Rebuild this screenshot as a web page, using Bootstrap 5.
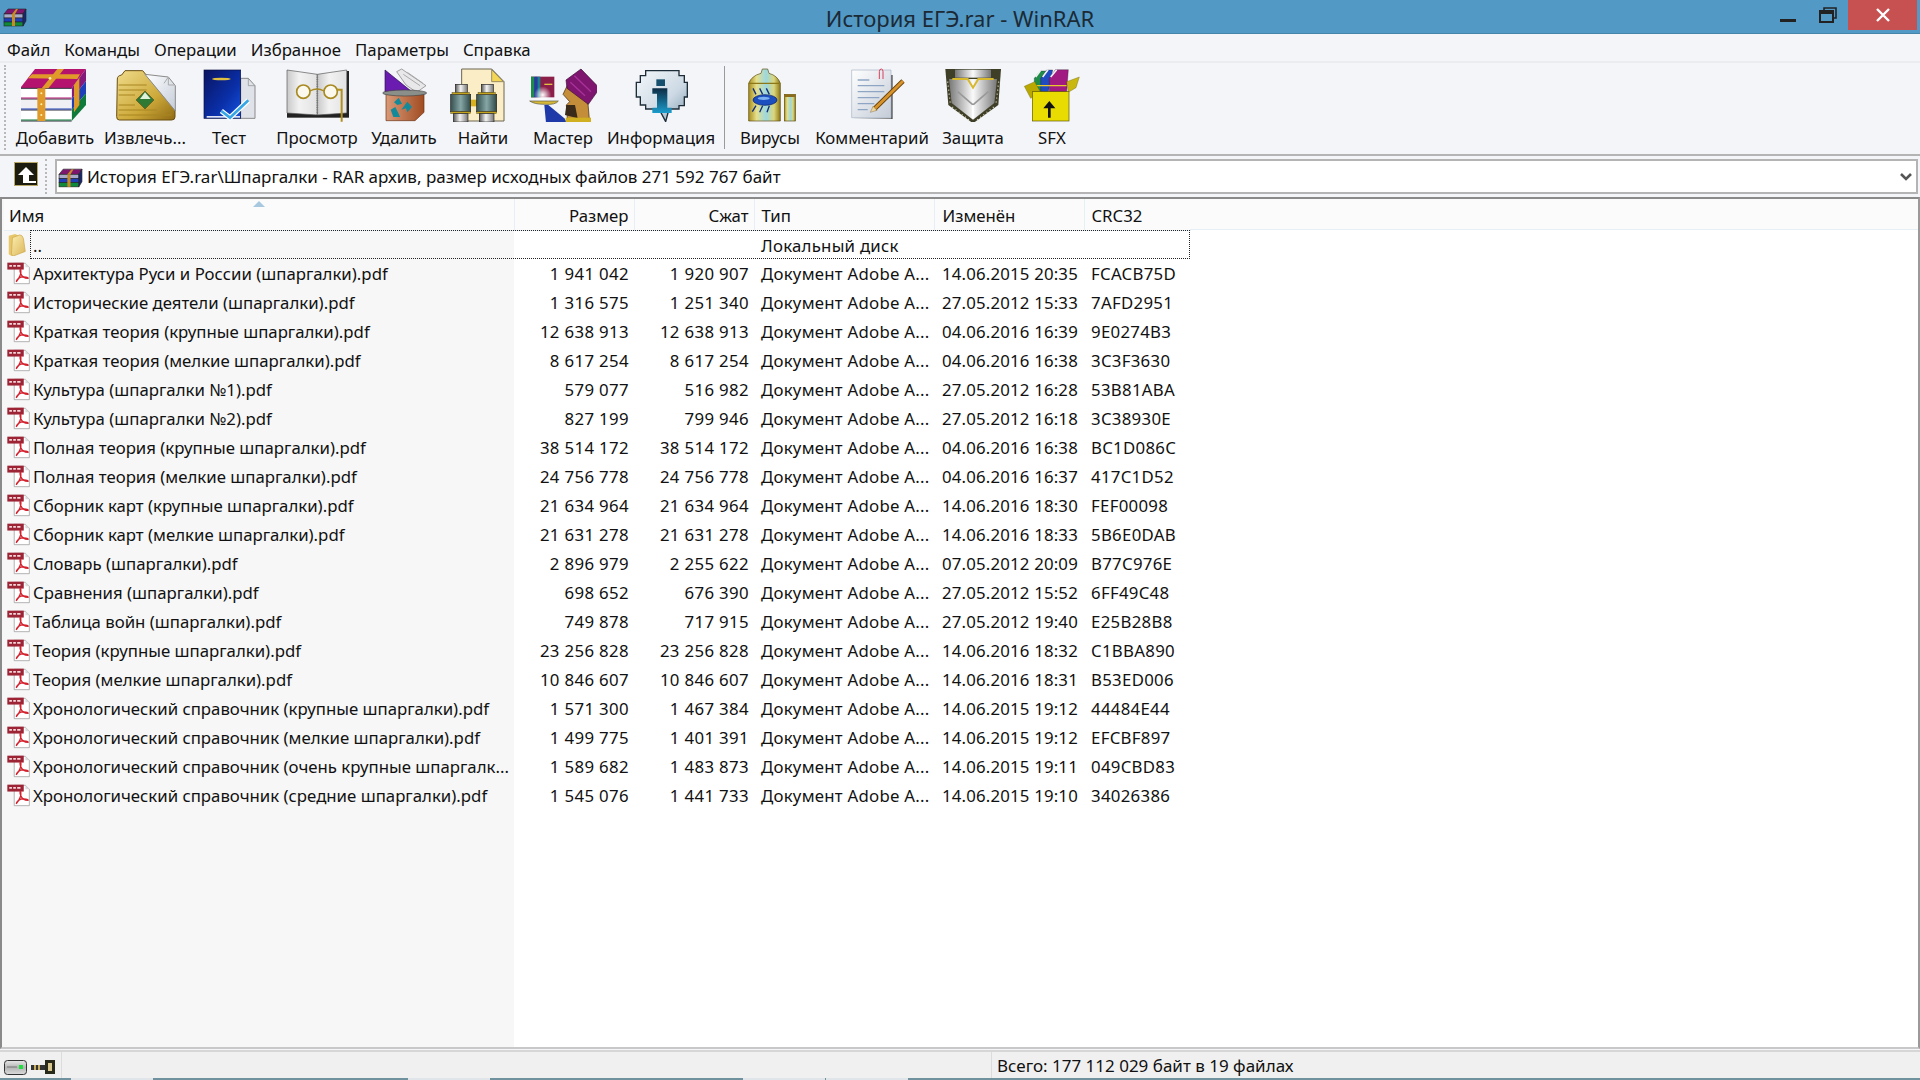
<!DOCTYPE html>
<html lang="ru">
<head>
<meta charset="UTF-8">
<meta name="viewport" content="width=device-width, initial-scale=1.0">
<title>История ЕГЭ.rar - WinRAR</title>
<link href="https://cdn.jsdelivr.net/npm/bootstrap@5.3.0/dist/css/bootstrap.min.css" rel="stylesheet">
<style>
html, body { height: 100%; }
body { font-family: "Noto Sans", "Open Sans", sans-serif; font-size: 16.8px; line-height: 1.2; color: #111; background: #f4f5f8; overflow: hidden; }
.app-title { height: 34px; background: #5299c5; border-bottom: 1px solid #4585ac; display: grid; grid-template-columns: 1fr auto 1fr; }
.app-title h1 { font-size: 22px; font-weight: 400; color: #1b2a35; margin: 5px 0 0; line-height: 1.2; }
.title-icon { width: 24px; height: 19px; margin: 8px 0 0 3px; }
.win-btns { padding-right: 3px; }
.win-min { width: 16px; height: 3px; background: #222; margin: 19px 23px 0 0; }
.win-max { width: 18px; height: 16px; margin: 7px 11px 0 0; }
.win-close { width: 69px; height: 30px; background: #c75050; }
.menu-row { height: 29px; padding: 6px 7px 0; gap: 14px; border-bottom: 2px solid #ebecef; }
.tool-row { height: 93px; padding-left: 14px; border-bottom: 2px solid #b4b4b4; position: relative; }
.grip { border-left: 2px dotted #b8b8b8; }
.tool-grip { position: absolute; left: 4px; top: 2px; bottom: 4px; }
.tool-btn { padding-top: 5px; }
.tool-btn svg { width: 68px; height: 54px; display: block; }
.tool-btn span { margin-top: 5px; white-space: nowrap; line-height: 22px; }
.w70 { width: 70px; } .w68 { width: 68px; } .w76 { width: 76px; } .w82 { width: 82px; } .w84 { width: 84px; }
.w90 { width: 90px; } .w98 { width: 98px; } .w106 { width: 106px; } .w120 { width: 120px; } .w126 { width: 126px; }
.tool-sep { width: 1px; background: #9a9a9a; margin: 3px 3px 5px 0; }
.addr-row { height: 41px; padding: 3px 2px 3px 0; font-size: 17px; }
.addr-up { width: 45px; padding-left: 14px; padding-top: 3px; }
.addr-up svg { width: 24px; height: 24px; display: block; }
.addr-box { background: #fff; border: 2px solid #b4b4b4; height: 35px; margin-left: 8px; padding: 2px 4px 0 0; }
.addr-box .rar-mini { width: 25px; height: 20px; margin-right: 4px; margin-left: 1px; }
.list-pane { border: 2px solid #8a8a8a; border-right-color: #9a9a9a; border-bottom-color: #c8c8c8; padding-left: 2px; background: linear-gradient(to right, #f7f7f7 512px, #fff 512px); overflow: hidden; }
.file-table { table-layout: fixed; width: 1186px; margin: 0; --bs-table-bg: transparent; color: #111; }
.file-table > :not(caption) > * > * { padding: 2px 0 0; border: 0; height: 29px; vertical-align: middle; white-space: nowrap; font-weight: 400; box-shadow: none; }
.file-table thead th { height: 31px; padding-top: 4px; background: #fbfbfb; border-right: 1px solid #e6eef6; border-bottom: 1px solid #e6eef6; position: relative; }
.hdr-fill { background: #fbfbfb; border-bottom: 1px solid #e6eef6; height: 31px; position: absolute; top: 0; left: 1186px; right: 0; }
.list-inner { position: relative; }
.col-name { width: 510px; } .col-size { width: 120px; } .col-comp { width: 120px; } .col-type { width: 180px; } .col-date { width: 150px; } .col-crc { width: 106px; }
.file-table .pl-name { padding-left: 29px; }
.file-table thead .pl-head { padding-left: 5px; }
.file-table .pr-num { padding-right: 5px; text-align: right; }
.file-table .pl-type { padding-left: 7px; }
.file-table .pl-date { padding-left: 8px; }
.file-table .pl-crc { padding-left: 7px; }
.file-table tbody .pr-num { letter-spacing: .36px; }
.file-table tbody .pl-type { letter-spacing: .25px; }
.file-table tbody .pl-date { letter-spacing: .18px; }
.file-table tbody .pl-crc { letter-spacing: .3px; }
.sort-mark { position: absolute; left: 249px; top: 2px; width: 12px; height: 6px; }
.row-ico { position: absolute; left: 3px; top: 3px; width: 23px; height: 23px; }
.row-ico.folder-ico { width: 20px; height: 22px; top: 3px; }
.file-table tbody td:first-child { position: relative; }
.focus-row { position: absolute; left: 26px; top: 31px; width: 1160px; height: 29px; border: 1px dotted #222; pointer-events: none; }
.stat-row { height: 28px; background: #f0f0f0; border-top: 2px solid #d6d6d6; margin-top: 1px; }
.stat-left { width: 62px; border-right: 1px solid #dcdcdc; padding: 8px 0 0 4px; gap: 4px; }
.stat-left svg { display: block; }
.stat-text { margin-left: 929px; border-left: 1px solid #dcdcdc; padding: 4px 0 0 5px; font-size: 17px; white-space: nowrap; }
.task-strip { height: 2px; background: #6f929e; }
.task-tab { height: 2px; background: #dfe5e8; width: 82px; }
.tab-a { margin-left: 71px; } .tab-b { margin-left: 255px; } .tab-c { margin-left: 253px; } .tab-d { margin-left: 1px; }
</style>
</head>
<body class="d-flex flex-column">

<svg width="0" height="0" class="position-absolute">
  <defs>
    <linearGradient id="gGold" x1="0" y1="0" x2="1" y2="1"><stop offset="0" stop-color="#f0dc8c"/><stop offset=".6" stop-color="#cda93a"/><stop offset="1" stop-color="#8f6a14"/></linearGradient>
    <linearGradient id="gBlue" x1="0" y1="0" x2="1" y2="1"><stop offset="0" stop-color="#0a1460"/><stop offset=".6" stop-color="#0a2fa8"/><stop offset="1" stop-color="#1554e0"/></linearGradient>
    <linearGradient id="gPage" x1="0" y1="0" x2="1" y2="1"><stop offset="0" stop-color="#fff"/><stop offset="1" stop-color="#c4ccd8"/></linearGradient>
    <linearGradient id="gPaper" x1="0" y1="0" x2="1" y2="0"><stop offset="0" stop-color="#c9c9c9"/><stop offset=".4" stop-color="#f2f2f2"/><stop offset="1" stop-color="#e2e2e2"/></linearGradient>
    <linearGradient id="gSilver" x1="0" y1="0" x2="1" y2="0"><stop offset="0" stop-color="#555"/><stop offset=".45" stop-color="#f4f4f4"/><stop offset="1" stop-color="#777"/></linearGradient>
    <linearGradient id="gDrive" x1="0" y1="0" x2="0" y2="1"><stop offset="0" stop-color="#e8e8e8"/><stop offset=".5" stop-color="#b4b4b4"/><stop offset="1" stop-color="#dcdcdc"/></linearGradient>
    <linearGradient id="gTeal" x1="0" y1="0" x2="1" y2="0"><stop offset="0" stop-color="#35504f"/><stop offset=".5" stop-color="#86a6a6"/><stop offset="1" stop-color="#2f4847"/></linearGradient>
    <linearGradient id="gBrown" x1="0" y1="0" x2="1" y2="0"><stop offset="0" stop-color="#d99a78"/><stop offset="1" stop-color="#a14c22"/></linearGradient>
    <linearGradient id="gCan" x1="0" y1="0" x2="1" y2="0"><stop offset="0" stop-color="#a78d1c"/><stop offset=".25" stop-color="#e6e08c"/><stop offset=".55" stop-color="#9cd8e0"/><stop offset=".8" stop-color="#dcd67a"/><stop offset="1" stop-color="#8d7716"/></linearGradient>
    <linearGradient id="gBubble" x1="0" y1="0" x2="1" y2="1"><stop offset="0" stop-color="#f4f8fb"/><stop offset=".6" stop-color="#ccd9e4"/><stop offset="1" stop-color="#7f99ad"/></linearGradient>
    <linearGradient id="gInfo" x1="0" y1="0" x2="0" y2="1"><stop offset="0" stop-color="#0c2c44"/><stop offset="1" stop-color="#1c9ccc"/></linearGradient>
    <linearGradient id="gShield" x1="0" y1="0" x2="1" y2="0"><stop offset="0" stop-color="#777"/><stop offset=".5" stop-color="#fafafa"/><stop offset="1" stop-color="#777"/></linearGradient>
    <linearGradient id="gFolder" x1="0" y1="0" x2="1" y2="1"><stop offset="0" stop-color="#fbeeb0"/><stop offset="1" stop-color="#dcb65a"/></linearGradient>
    <radialGradient id="gGlow"><stop offset="0" stop-color="#fff"/><stop offset="1" stop-color="#fff" stop-opacity="0"/></radialGradient>

    <symbol id="rar" viewBox="55 38 210 165">
      <polygon points="60,100 105,42 258,42 215,100" fill="#b4146e"/>
      <polygon points="215,100 258,42 258,78 215,132" fill="#861a7a"/>
      <polygon points="215,132 258,78 258,115 215,165" fill="#1f3fb8"/>
      <polygon points="215,165 258,115 258,150 215,198" fill="#0f7a3a"/>
      <rect x="60" y="100" width="155" height="32" fill="#fff"/>
      <rect x="60" y="132" width="155" height="33" fill="#f0f0f4"/>
      <rect x="60" y="165" width="155" height="33" fill="#fff"/>
      <path d="M60 100H215M60 132H215M60 165H215M60 198H215" stroke="#2c2c3a" stroke-width="3" fill="none"/>
      <path d="M60 129H215" stroke="#b4146e" stroke-width="3"/>
      <path d="M60 162H215" stroke="#1f3fb8" stroke-width="3"/>
      <path d="M60 195H215" stroke="#0f7a3a" stroke-width="3"/>
      <polygon points="112,100 136,100 136,198 112,198" fill="#e09a2a"/>
      <polygon points="125,100 172,42 192,42 145,100" fill="#e09a2a"/>
      <polygon points="84,70 96,58 240,58 232,72" fill="#e09a2a"/>
      <polygon points="222,90 238,68 238,150 222,172" fill="#e09a2a"/>
      <circle cx="124" cy="115" r="3" fill="#fff3b0"/><circle cx="124" cy="148" r="3" fill="#fff3b0"/><circle cx="124" cy="180" r="3" fill="#fff3b0"/><circle cx="150" cy="70" r="4" fill="#fff3b0"/>
    </symbol>

    <symbol id="rarSmall" viewBox="0 0 24 19">
      <polygon points="1,6 5,1 23,1 20,6" fill="#7e1670" stroke="#222" stroke-width=".6"/>
      <rect x="1" y="6" width="19" height="4" fill="#a8a8c8" stroke="#222" stroke-width=".6"/>
      <rect x="1" y="10" width="19" height="4" fill="#1f3fb8" stroke="#222" stroke-width=".6"/>
      <rect x="1" y="14" width="19" height="4" fill="#0f8a3a" stroke="#222" stroke-width=".6"/>
      <polygon points="20,6 23,1 23,13 20,18" fill="#18286e" stroke="#222" stroke-width=".6"/>
      <rect x="9" y="6" width="3" height="12" fill="#c88a24"/>
      <polygon points="9,6 13,1 15,1 12,6" fill="#c88a24"/>
    </symbol>

    <symbol id="pdf" viewBox="20 126 70 70">
      <polygon points="42,130 76,130 88,142 88,192 42,192" fill="#fff" stroke="#8d8d8d" stroke-width="2"/>
      <polygon points="76,130 88,142 76,142" fill="#dcdcdc"/>
      <rect x="21" y="128" width="50" height="21" fill="#9d2435"/>
      <path d="M27 138h8M39 138h8M51 138h10" stroke="#f4d8dc" stroke-width="5"/>
      <path d="M48 186C58 176 64 160 62 150C60 146 58 152 62 162C66 172 76 176 84 176C86 172 72 170 62 172C56 174 50 180 48 186Z" fill="none" stroke="#d3212d" stroke-width="4"/>
    </symbol>

    <symbol id="folderIco" viewBox="3 1 18 24">
      <path d="M3 3 L10 1 L14 3 V21 L6 25 L3 23Z" fill="#e8c66a"/>
      <path d="M7 5 L15 2 Q18 2 19 6 L21 20 L8 25 Q6 25 6 22Z" fill="url(#gFolder)" stroke="#cfa94e" stroke-width=".8"/>
    </symbol>
  </defs>
</svg>

<header class="app-title flex-shrink-0">
  <div><svg class="title-icon d-block"><use href="#rarSmall"/></svg></div>
  <h1>История ЕГЭ.rar - WinRAR</h1>
  <div class="d-flex justify-content-end align-items-start win-btns">
    <div class="win-min"></div>
    <svg class="win-max" viewBox="0 0 18 16"><path d="M5 3V1H17V11H15" fill="none" stroke="#222" stroke-width="1.6"/><rect x="1" y="4" width="13" height="11" fill="none" stroke="#222" stroke-width="2"/><rect x="1" y="4" width="13" height="3" fill="#222"/></svg>
    <div class="win-close d-flex align-items-center justify-content-center">
      <svg width="14" height="14" viewBox="0 0 14 14"><path d="M1 1L13 13M13 1L1 13" stroke="#fff" stroke-width="2.4"/></svg>
    </div>
  </div>
</header>

<nav class="menu-row d-flex flex-shrink-0">
  <span>Файл</span><span>Команды</span><span>Операции</span><span>Избранное</span><span>Параметры</span><span>Справка</span>
</nav>

<div class="tool-row d-flex flex-shrink-0">
  <div class="grip tool-grip"></div>

  <div class="tool-btn w82 d-flex flex-column align-items-center">
    <svg viewBox="63 39 204 162"><use href="#rar" x="55" y="38" width="210" height="165"/></svg>
    <span>Добавить</span>
  </div>

  <div class="tool-btn w98 d-flex flex-column align-items-center">
    <svg viewBox="333 39 204 162">
      <path d="M352 72Q352 62 365 60L375 47H428L525 165V186Q525 195 515 195H358Q350 195 350 185Z" fill="url(#gGold)" stroke="#6b4e10" stroke-width="3"/>
      <path d="M356 90H440M356 105H440M356 120H405M356 150H405M356 165H470M356 180H515" stroke="#a88620" stroke-width="3"/>
      <polygon points="435,58 505,66 526,92 526,168" fill="url(#gPage)" stroke="#8a8a8a" stroke-width="3"/>
      <path d="M492 85L505 66V90H524" fill="none" stroke="#aaa" stroke-width="3"/>
      <polygon points="435,108 462,135 435,162 408,135" fill="#2e7a34" stroke="#6b4e10" stroke-width="2"/>
      <polygon points="435,112 452,132 420,132" fill="#dff2da"/>
    </svg>
    <span>Извлечь...</span>
  </div>

  <div class="tool-btn w70 d-flex flex-column align-items-center">
    <svg viewBox="585 39 204 162">
      <polygon points="722,70 745,70 765,92 765,190 722,190" fill="#dfe2e8" stroke="#8a8a8a" stroke-width="3"/>
      <path d="M745 70V92H765" fill="none" stroke="#8a8a8a" stroke-width="2"/>
      <rect x="612" y="45" width="110" height="145" fill="url(#gBlue)" stroke="#081040" stroke-width="2"/>
      <rect x="620" y="183" width="100" height="5" fill="#dfe2f0"/>
      <ellipse cx="664" cy="72" rx="28" ry="4" fill="#e0c040"/>
      <path d="M664 168L690 188L745 136" fill="none" stroke="#fff" stroke-width="15"/>
      <path d="M664 168L690 188L745 136" fill="none" stroke="#36a6e6" stroke-width="8"/>
    </svg>
    <span>Тест</span>
  </div>

  <div class="tool-btn w106 d-flex flex-column align-items-center">
    <svg viewBox="-51 39 204 162">
      <rect x="-39" y="172" width="186" height="16" fill="#222"/>
      <rect x="140" y="48" width="7" height="130" fill="#222"/>
      <polygon points="-39,45 52,58 52,180 -39,174" fill="url(#gPaper)" stroke="#555" stroke-width="2"/>
      <polygon points="52,58 140,45 140,174 52,180" fill="url(#gPaper)" stroke="#555" stroke-width="2"/>
      <path d="M52 58V180" stroke="#777" stroke-width="5" stroke-dasharray="3 4"/>
      <circle cx="10" cy="110" r="20" fill="#fbf9ee" stroke="#a88a20" stroke-width="5"/>
      <circle cx="92" cy="110" r="20" fill="#fbf9ee" stroke="#a88a20" stroke-width="5"/>
      <path d="M30 108Q51 96 72 108" fill="none" stroke="#a88a20" stroke-width="4"/>
      <path d="M112 104H125V200" fill="none" stroke="#b09020" stroke-width="6"/>
    </svg>
    <span>Просмотр</span>
  </div>

  <div class="tool-btn w68 d-flex flex-column align-items-center">
    <svg viewBox="210 39 204 162">
      <polygon points="255,45 255,112 338,112" fill="#6a1bb0" stroke="#2a1050" stroke-width="2"/>
      <polygon points="290,50 305,42 378,92 350,112 318,90" fill="#e8e8ea" stroke="#777" stroke-width="2"/>
      <path d="M310 58L360 92M322 52L368 84" stroke="#aaa" stroke-width="3"/>
      <polygon points="258,118 372,118 372,172 345,197 258,197" fill="url(#gBrown)" stroke="#6b3014" stroke-width="2"/>
      <ellipse cx="314" cy="114" rx="66" ry="9" fill="#8a8f8a" stroke="#444" stroke-width="2"/>
      <path d="M282 142L296 128L306 146L292 150ZM322 140L336 156L322 172L318 160L304 164ZM272 164L286 156L296 176L300 186L280 186Z" fill="#138a9a"/>
    </svg>
    <span>Удалить</span>
  </div>

  <div class="tool-btn w90 d-flex flex-column align-items-center">
    <svg viewBox="447 39 204 162">
      <polygon points="485,42 575,42 612,80 612,198 485,198" fill="#fbeec6" stroke="#6b6450" stroke-width="3"/>
      <polygon points="575,44 610,80 575,80" fill="#f4d657" stroke="#6b6450" stroke-width="2"/>
      <rect x="505" y="134" width="26" height="20" fill="#d8b020"/>
      <g id="binoL">
        <rect x="466" y="88" width="36" height="26" fill="url(#gSilver)" stroke="#222" stroke-width="2"/>
        <rect x="452" y="118" width="60" height="52" fill="url(#gTeal)" stroke="#222" stroke-width="2"/>
        <rect x="456" y="112" width="52" height="6" fill="#c4a41c" stroke="#222"/>
        <rect x="452" y="170" width="60" height="6" fill="#c4a41c" stroke="#222"/>
        <rect x="460" y="176" width="44" height="25" fill="url(#gSilver)" stroke="#222" stroke-width="2"/>
      </g>
      <use href="#binoL" x="78"/>
    </svg>
    <span>Найти</span>
  </div>

  <div class="tool-btn w70 d-flex flex-column align-items-center">
    <svg viewBox="684 39 204 162">
      <rect x="690" y="65" width="70" height="62" fill="#8c1f4a"/>
      <rect x="690" y="65" width="10" height="62" fill="#1c8c4a"/><rect x="700" y="65" width="10" height="62" fill="#1a40a8"/><rect x="710" y="65" width="8" height="62" fill="#17808c"/>
      <rect x="730" y="86" width="24" height="4" fill="#e0c040"/>
      <circle cx="725" cy="120" r="26" fill="url(#gGlow)"/>
      <path d="M686 138H772Q765 150 730 148Q700 148 686 138Z" fill="#d8b838" stroke="#554" stroke-width="2"/>
      <polygon points="730,150 742,150 790,190 798,203 735,203" fill="#1f3aa8"/>
      <polygon points="786,118 802,85 860,135 866,203 800,203 796,150 806,140" fill="#c48d3a" stroke="#3c2408" stroke-width="2"/>
      <path d="M796 150L792 180L830 190L822 150Z" fill="#3a2a1a"/>
      <path d="M794 188H870V203H794Z" fill="#d0b020"/>
      <path d="M795 75L840 42L896 100L862 148L798 100Z" fill="#7e1670" stroke="#3a0a34" stroke-width="2"/>
      <path d="M820 62L870 110M808 82L852 122" stroke="#a8329a" stroke-width="4"/>
    </svg>
    <span>Мастер</span>
  </div>

  <div class="tool-btn w126 d-flex flex-column align-items-center">
    <svg viewBox="24 39 204 162">
      <path d="M80 47H180V62H196V82H205V126H196V152H180V162H150L140 200L120 162H80V150H64V126H52V82H64V62H80Z" fill="url(#gBubble)" stroke="#1c2c38" stroke-width="4"/>
      <rect x="112" y="73" width="26" height="20" fill="#15506e"/>
      <path d="M100 100H145V158H158V174H100V158H114V116H100Z" fill="url(#gInfo)"/>
    </svg>
    <span>Информация</span>
  </div>

  <div class="tool-sep flex-shrink-0"></div>

  <div class="tool-btn w84 d-flex flex-column align-items-center">
    <svg viewBox="345 39 204 162">
      <path d="M383 85Q392 62 420 55L424 42H440L444 55Q470 62 478 85V198H383Z" fill="url(#gCan)" stroke="#5a4a10" stroke-width="2"/>
      <path d="M383 85H478" stroke="#8d7716" stroke-width="4"/>
      <ellipse cx="432" cy="135" rx="36" ry="16" fill="#1c4ec0" stroke="#0a1c60" stroke-width="2"/>
      <ellipse cx="428" cy="130" rx="18" ry="5" fill="#7ab0f0"/>
      <path d="M405 118L396 100M425 118L416 100M445 118L436 100M405 152L394 170M425 152L416 172M445 152L438 172" stroke="#0e2c80" stroke-width="4" fill="none"/>
      <rect x="490" y="118" width="33" height="80" fill="url(#gCan)" stroke="#5a4a10" stroke-width="2"/>
      <rect x="490" y="118" width="33" height="8" fill="#8d6a1c"/>
    </svg>
    <span>Вирусы</span>
  </div>

  <div class="tool-btn w120 d-flex flex-column align-items-center">
    <svg viewBox="651 39 204 162">
      <polygon points="694,192 815,192 815,60 810,60 810,190" fill="#555"/>
      <polygon points="692,45 810,45 810,150 810,188 692,188" fill="url(#gPage)" stroke="#a8b4c4" stroke-width="2"/>
      <path d="M710 75H745M710 92H790M710 110H790M710 128H775M710 146H760M710 164H740" stroke="#8ea6c4" stroke-width="4"/>
      <path d="M775 72V50Q775 42 781 42Q786 42 786 50V72" fill="none" stroke="#d8405a" stroke-width="3"/>
      <path d="M760 162L846 78" stroke="#6b4008" stroke-width="14"/>
      <path d="M760 162L846 78" stroke="#d8942c" stroke-width="9"/>
      <polygon points="748,172 756,154 768,166" fill="#ecd7a0" stroke="#6b4008"/>
    </svg>
    <span>Комментарий</span>
  </div>

  <div class="tool-btn w82 d-flex flex-column align-items-center">
    <svg viewBox="954 39 204 162">
      <polygon points="973,42 1140,42 1132,150 1056,205 982,150" fill="#3f3f28"/>
      <polygon points="984,72 1128,72 1120,144 1056,194 992,144" fill="url(#gShield)"/>
      <rect x="1002" y="44" width="108" height="24" fill="url(#gShield)"/>
      <path d="M994 72H1040L1056 98L1072 72H1118" fill="none" stroke="#d8b82c" stroke-width="6"/>
      <path d="M1010 110L1056 150L1102 110" fill="none" stroke="#999" stroke-width="5"/>
      <path d="M1056 150V190" stroke="#fff" stroke-width="5"/>
      <path d="M980 80L988 146M1133 80L1125 146M994 156L1050 200M1118 156L1062 200" stroke="#d8d8c0" stroke-width="4" stroke-dasharray="3 9"/>
    </svg>
    <span>Защита</span>
  </div>

  <div class="tool-btn w76 d-flex flex-column align-items-center">
    <svg viewBox="1194 39 204 162">
      <polygon points="1243,70 1260,48 1278,48 1262,112 1243,112" fill="#1f8c48" stroke="#222"/>
      <polygon points="1262,70 1280,45 1298,45 1285,112 1262,112" fill="#1f4ac0" stroke="#222"/>
      <polygon points="1288,70 1306,44 1345,44 1340,112 1288,112" fill="#a01a82" stroke="#222"/>
      <path d="M1247 66L1262 46M1268 66L1284 44M1292 66L1310 44" stroke="#f0f0f0" stroke-width="5"/>
      <path d="M1243 92H1340" stroke="#e8c82c" stroke-width="4"/>
      <polygon points="1213,94 1244,80 1262,112 1232,130" fill="#b8a800" stroke="#5a5400"/>
      <polygon points="1340,80 1378,66 1368,98 1345,112" fill="#c8b810" stroke="#5a5400"/>
      <rect x="1237" y="110" width="110" height="88" fill="#e8dc00" stroke="#5a5400" stroke-width="2"/>
      <path d="M1284 188V160H1270L1288 138L1306 160H1292V188Z" fill="#111"/>
    </svg>
    <span>SFX</span>
  </div>
</div>

<div class="addr-row d-flex flex-shrink-0">
  <div class="addr-up flex-shrink-0">
    <svg viewBox="0 0 24 24"><rect x="0.5" y="0.5" width="23" height="23" fill="#1c1c10" stroke="#b8a868"/><path d="M12 5L20 13H15V19H22V21H9V13H4Z" fill="#fff"/></svg>
  </div>
  <div class="grip"></div>
  <div class="addr-box flex-grow-1 d-flex align-items-center">
    <svg class="rar-mini"><use href="#rarSmall"/></svg>
    <span class="flex-grow-1">История ЕГЭ.rar\Шпаргалки - RAR архив, размер исходных файлов 271 592 767 байт</span>
    <svg width="12" height="9" viewBox="0 0 12 9"><path d="M1 1L6 6L11 1" fill="none" stroke="#555" stroke-width="2.6"/></svg>
  </div>
</div>

<main class="list-pane flex-grow-1">
  <div class="list-inner">
    <div class="hdr-fill"></div>
    <table class="table file-table">
      <colgroup><col class="col-name"><col class="col-size"><col class="col-comp"><col class="col-type"><col class="col-date"><col class="col-crc"></colgroup>
      <thead>
        <tr>
          <th class="pl-head">Имя<svg class="sort-mark" viewBox="0 0 12 6"><polygon points="6,0 12,6 0,6" fill="#a8c8e0"/></svg></th>
          <th class="pr-num">Размер</th><th class="pr-num">Сжат</th><th class="pl-type">Тип</th><th class="pl-date">Изменён</th><th class="pl-crc">CRC32</th>
        </tr>
      </thead>
      <tbody>
        <tr><td class="pl-name"><svg class="row-ico folder-ico"><use href="#folderIco"/></svg>..</td><td></td><td></td><td class="pl-type">Локальный диск</td><td></td><td></td></tr>
        <tr><td class="pl-name"><svg class="row-ico"><use href="#pdf"/></svg>Архитектура Руси и России (шпаргалки).pdf</td><td class="pr-num">1 941 042</td><td class="pr-num">1 920 907</td><td class="pl-type">Документ Adobe A...</td><td class="pl-date">14.06.2015 20:35</td><td class="pl-crc">FCACB75D</td></tr>
        <tr><td class="pl-name"><svg class="row-ico"><use href="#pdf"/></svg>Исторические деятели (шпаргалки).pdf</td><td class="pr-num">1 316 575</td><td class="pr-num">1 251 340</td><td class="pl-type">Документ Adobe A...</td><td class="pl-date">27.05.2012 15:33</td><td class="pl-crc">7AFD2951</td></tr>
        <tr><td class="pl-name"><svg class="row-ico"><use href="#pdf"/></svg>Краткая теория (крупные шпаргалки).pdf</td><td class="pr-num">12 638 913</td><td class="pr-num">12 638 913</td><td class="pl-type">Документ Adobe A...</td><td class="pl-date">04.06.2016 16:39</td><td class="pl-crc">9E0274B3</td></tr>
        <tr><td class="pl-name"><svg class="row-ico"><use href="#pdf"/></svg>Краткая теория (мелкие шпаргалки).pdf</td><td class="pr-num">8 617 254</td><td class="pr-num">8 617 254</td><td class="pl-type">Документ Adobe A...</td><td class="pl-date">04.06.2016 16:38</td><td class="pl-crc">3C3F3630</td></tr>
        <tr><td class="pl-name"><svg class="row-ico"><use href="#pdf"/></svg>Культура (шпаргалки №1).pdf</td><td class="pr-num">579 077</td><td class="pr-num">516 982</td><td class="pl-type">Документ Adobe A...</td><td class="pl-date">27.05.2012 16:28</td><td class="pl-crc">53B81ABA</td></tr>
        <tr><td class="pl-name"><svg class="row-ico"><use href="#pdf"/></svg>Культура (шпаргалки №2).pdf</td><td class="pr-num">827 199</td><td class="pr-num">799 946</td><td class="pl-type">Документ Adobe A...</td><td class="pl-date">27.05.2012 16:18</td><td class="pl-crc">3C38930E</td></tr>
        <tr><td class="pl-name"><svg class="row-ico"><use href="#pdf"/></svg>Полная теория (крупные шпаргалки).pdf</td><td class="pr-num">38 514 172</td><td class="pr-num">38 514 172</td><td class="pl-type">Документ Adobe A...</td><td class="pl-date">04.06.2016 16:38</td><td class="pl-crc">BC1D086C</td></tr>
        <tr><td class="pl-name"><svg class="row-ico"><use href="#pdf"/></svg>Полная теория (мелкие шпаргалки).pdf</td><td class="pr-num">24 756 778</td><td class="pr-num">24 756 778</td><td class="pl-type">Документ Adobe A...</td><td class="pl-date">04.06.2016 16:37</td><td class="pl-crc">417C1D52</td></tr>
        <tr><td class="pl-name"><svg class="row-ico"><use href="#pdf"/></svg>Сборник карт (крупные шпаргалки).pdf</td><td class="pr-num">21 634 964</td><td class="pr-num">21 634 964</td><td class="pl-type">Документ Adobe A...</td><td class="pl-date">14.06.2016 18:30</td><td class="pl-crc">FEF00098</td></tr>
        <tr><td class="pl-name"><svg class="row-ico"><use href="#pdf"/></svg>Сборник карт (мелкие шпаргалки).pdf</td><td class="pr-num">21 631 278</td><td class="pr-num">21 631 278</td><td class="pl-type">Документ Adobe A...</td><td class="pl-date">14.06.2016 18:33</td><td class="pl-crc">5B6E0DAB</td></tr>
        <tr><td class="pl-name"><svg class="row-ico"><use href="#pdf"/></svg>Словарь (шпаргалки).pdf</td><td class="pr-num">2 896 979</td><td class="pr-num">2 255 622</td><td class="pl-type">Документ Adobe A...</td><td class="pl-date">07.05.2012 20:09</td><td class="pl-crc">B77C976E</td></tr>
        <tr><td class="pl-name"><svg class="row-ico"><use href="#pdf"/></svg>Сравнения (шпаргалки).pdf</td><td class="pr-num">698 652</td><td class="pr-num">676 390</td><td class="pl-type">Документ Adobe A...</td><td class="pl-date">27.05.2012 15:52</td><td class="pl-crc">6FF49C48</td></tr>
        <tr><td class="pl-name"><svg class="row-ico"><use href="#pdf"/></svg>Таблица войн (шпаргалки).pdf</td><td class="pr-num">749 878</td><td class="pr-num">717 915</td><td class="pl-type">Документ Adobe A...</td><td class="pl-date">27.05.2012 19:40</td><td class="pl-crc">E25B28B8</td></tr>
        <tr><td class="pl-name"><svg class="row-ico"><use href="#pdf"/></svg>Теория (крупные шпаргалки).pdf</td><td class="pr-num">23 256 828</td><td class="pr-num">23 256 828</td><td class="pl-type">Документ Adobe A...</td><td class="pl-date">14.06.2016 18:32</td><td class="pl-crc">C1BBA890</td></tr>
        <tr><td class="pl-name"><svg class="row-ico"><use href="#pdf"/></svg>Теория (мелкие шпаргалки).pdf</td><td class="pr-num">10 846 607</td><td class="pr-num">10 846 607</td><td class="pl-type">Документ Adobe A...</td><td class="pl-date">14.06.2016 18:31</td><td class="pl-crc">B53ED006</td></tr>
        <tr><td class="pl-name"><svg class="row-ico"><use href="#pdf"/></svg>Хронологический справочник (крупные шпаргалки).pdf</td><td class="pr-num">1 571 300</td><td class="pr-num">1 467 384</td><td class="pl-type">Документ Adobe A...</td><td class="pl-date">14.06.2015 19:12</td><td class="pl-crc">44484E44</td></tr>
        <tr><td class="pl-name"><svg class="row-ico"><use href="#pdf"/></svg>Хронологический справочник (мелкие шпаргалки).pdf</td><td class="pr-num">1 499 775</td><td class="pr-num">1 401 391</td><td class="pl-type">Документ Adobe A...</td><td class="pl-date">14.06.2015 19:12</td><td class="pl-crc">EFCBF897</td></tr>
        <tr><td class="pl-name"><svg class="row-ico"><use href="#pdf"/></svg>Хронологический справочник (очень крупные шпаргалк...</td><td class="pr-num">1 589 682</td><td class="pr-num">1 483 873</td><td class="pl-type">Документ Adobe A...</td><td class="pl-date">14.06.2015 19:11</td><td class="pl-crc">049CBD83</td></tr>
        <tr><td class="pl-name"><svg class="row-ico"><use href="#pdf"/></svg>Хронологический справочник (средние шпаргалки).pdf</td><td class="pr-num">1 545 076</td><td class="pr-num">1 441 733</td><td class="pl-type">Документ Adobe A...</td><td class="pl-date">14.06.2015 19:10</td><td class="pl-crc">34026386</td></tr>
      </tbody>
    </table>
    <div class="focus-row"></div>
  </div>
</main>

<footer class="stat-row d-flex flex-shrink-0">
  <div class="stat-left d-flex flex-shrink-0">
    <svg width="23" height="15" viewBox="0 0 23 15"><rect x="0.5" y="0.5" width="22" height="14" rx="3" fill="url(#gDrive)" stroke="#333"/><path d="M3 7H13" stroke="#777"/><rect x="15" y="5" width="4" height="4" fill="#20e040"/></svg>
    <svg width="24" height="14" viewBox="0 0 24 14"><path d="M0 5H14V10H0Z" fill="#333"/><rect x="3" y="5" width="2" height="5" fill="#c8b060"/><rect x="7" y="5" width="2" height="5" fill="#c8b060"/><rect x="14" y="0" width="10" height="14" fill="#2a2a1a"/><rect x="17" y="3" width="4" height="8" fill="#d8c890"/></svg>
  </div>
  <div class="stat-text">Всего: 177 112 029 байт в 19 файлах</div>
</footer>

<div class="task-strip d-flex flex-shrink-0">
  <div class="task-tab tab-a"></div><div class="task-tab tab-b"></div><div class="task-tab tab-c"></div><div class="task-tab tab-d"></div>
</div>

</body>
</html>
